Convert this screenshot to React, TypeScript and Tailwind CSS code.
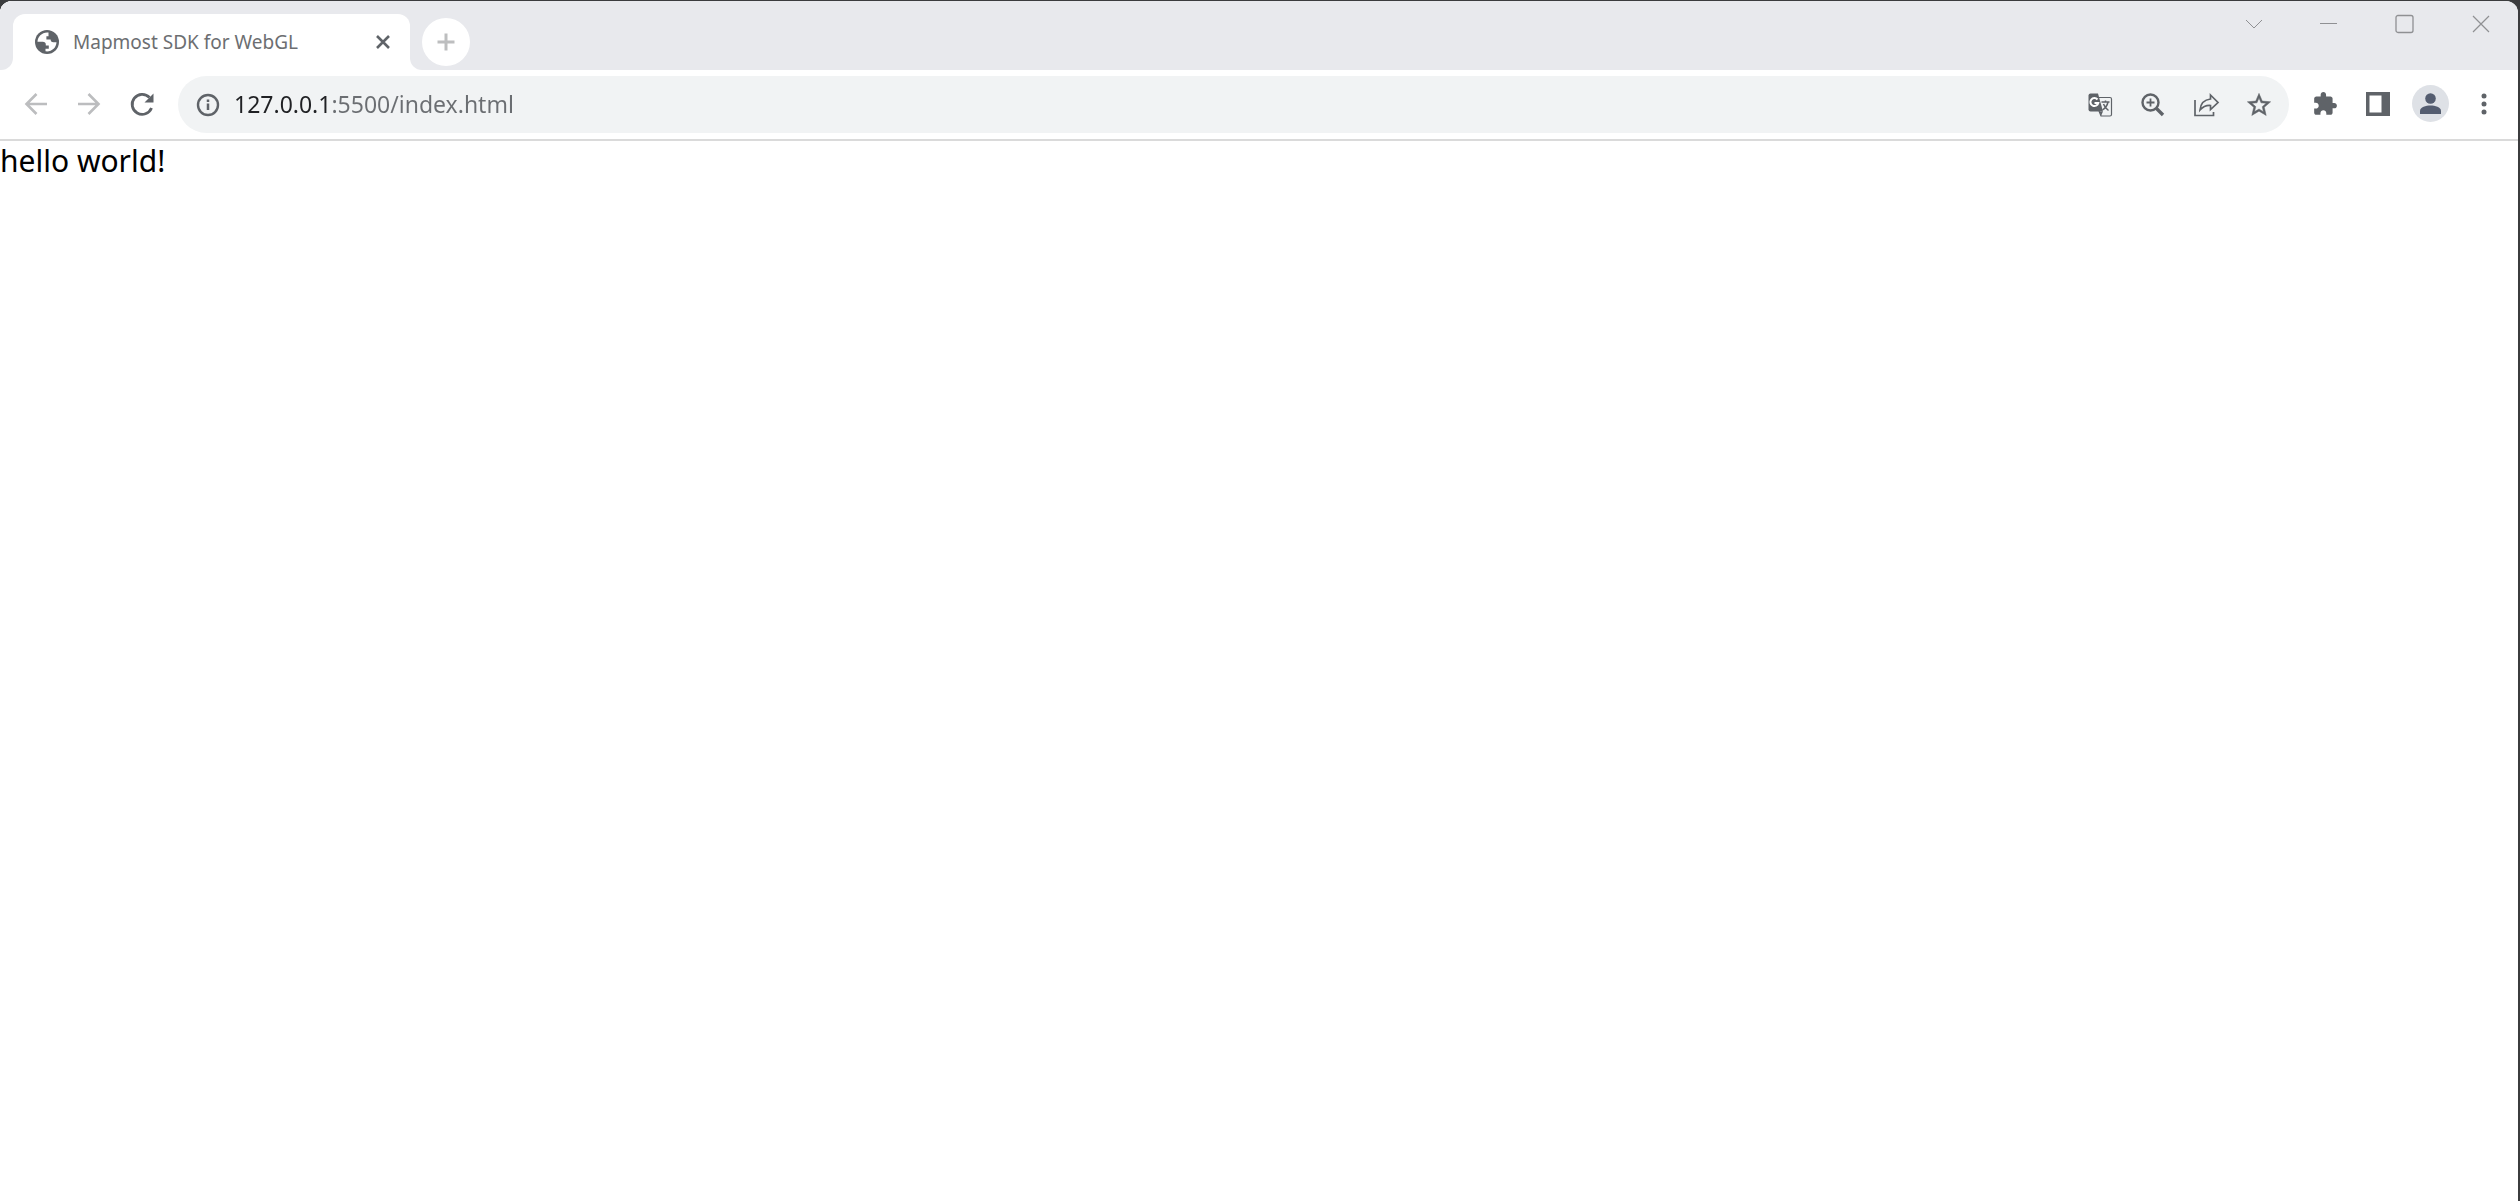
import React from "react";

type IconProps = { children: React.ReactNode; className?: string; box?: string };

function Icon({ children, className = "size-8", box = "0 0 32 32" }: IconProps) {
  return (
    <svg viewBox={box} className={className} fill="none" aria-hidden="true">
      {children}
    </svg>
  );
}

function ToolButton({ label, children, className = "" }: { label: string; children: React.ReactNode; className?: string }) {
  return (
    <button type="button" aria-label={label} className={`flex h-14 w-[53px] shrink-0 items-center justify-center ${className}`}>
      {children}
    </button>
  );
}

function WindowButton({ label, children }: { label: string; children: React.ReactNode }) {
  return (
    <button type="button" aria-label={label} className="flex h-[46px] w-[76px] items-center justify-center text-[#8f9093]">
      {children}
    </button>
  );
}

function TabStrip() {
  return (
    <header className="flex h-[69px] justify-between bg-[#e8e9ed]">
      <div className="flex">
        <div className="w-[13px] self-stretch bg-white">
          <div className="h-full rounded-br-xl bg-[#e8e9ed]" />
        </div>
        <div className="mt-[13px] flex w-[397px] items-center rounded-t-xl bg-white pr-[15px] pl-[22px]">
          <Icon className="size-6 shrink-0" box="0 0 24 24">
            <circle cx="12" cy="12" r="12" fill="#5f6368" />
            <path
              d="M13.5 2.6c-6-.8-10.900 4-11 9.200h5.200c2 0 3.100 1 3.100 2.600v1.200h3v3.200h-3.300v2.500c5.900.8 10.800-3.400 11-9h-3.200c-1.800 0-2.700-1.200-2.700-2.700h-4.200V6.200h2.100z"
              fill="#fff"
            />
          </Icon>
          <h1 className="ml-[14px] flex-1 font-['Noto_Sans'] text-[19px] leading-7 font-normal text-[#6c6e71]">Mapmost SDK for WebGL</h1>
          <button type="button" aria-label="Close tab" className="flex size-6 items-center justify-center">
            <Icon className="size-4" box="0 0 16 16">
              <path d="M2 2l12 12M14 2L2 14" stroke="#5f6368" strokeWidth="2.600" />
            </Icon>
          </button>
        </div>
        <div className="w-3 self-stretch bg-white">
          <div className="h-full rounded-bl-xl bg-[#e8e9ed]" />
        </div>
        <button type="button" aria-label="New tab" className="mt-[17px] flex size-12 items-center justify-center rounded-full bg-white">
          <Icon className="size-5" box="0 0 20 20">
            <path d="M10 1.500v17M1.500 10h17" stroke="#bdbebf" strokeWidth="3" />
          </Icon>
        </button>
      </div>
      <div className="flex">
        <WindowButton label="Search tabs">
          <Icon className="size-6" box="0 0 24 24">
            <path d="M6 8l8 8 8-8" stroke="currentColor" />
          </Icon>
        </WindowButton>
        <WindowButton label="Minimize">
          <Icon className="size-5" box="0 0 20 20">
            <path d="M2 9.500h17" stroke="currentColor" />
          </Icon>
        </WindowButton>
        <WindowButton label="Maximize">
          <Icon className="size-5" box="0 0 20 20">
            <rect x="2" y="1.500" width="17" height="17" rx="2" stroke="currentColor" strokeWidth="1.300" />
          </Icon>
        </WindowButton>
        <WindowButton label="Close">
          <Icon className="size-5" box="0 0 20 20">
            <path d="M3 2l16 16M19 2L3 18" stroke="currentColor" strokeWidth="1.200" />
          </Icon>
        </WindowButton>
      </div>
    </header>
  );
}

function Toolbar() {
  return (
    <nav className="flex h-[71px] items-center border-b-2 border-[#dadada] bg-white pr-2 pl-[9px] text-[#5f6368]">
      <ToolButton label="Back" className="pb-0.5 text-[#bcbdbf]">
        <Icon>
          <path d="M27 16H7M16.500 6L6.500 16l10 10" stroke="currentColor" strokeWidth="2.600" />
        </Icon>
      </ToolButton>
      <ToolButton label="Forward" className="pb-0.5 text-[#bcbdbf]">
        <Icon>
          <path d="M5 16h20M15.500 6l10 10-10 10" stroke="currentColor" strokeWidth="2.600" />
        </Icon>
      </ToolButton>
      <ToolButton label="Reload" className="pb-0.5">
        <Icon>
          <path d="M25.500 20A10 10 0 1 1 23.500 9.500" stroke="currentColor" strokeWidth="2.800" />
          <path d="M27.500 5.500v9h-9z" fill="currentColor" />
        </Icon>
      </ToolButton>
      <div className="ml-[10px] flex h-[57px] min-w-0 flex-1 items-center rounded-full bg-[#f1f3f4] pr-1 pl-3.5">
        <button type="button" aria-label="View site information">
          <Icon>
            <circle cx="16" cy="16" r="10" stroke="currentColor" strokeWidth="2.400" />
            <path d="M16 14.500v6.500M16 10.500v2.500" stroke="currentColor" strokeWidth="2.500" />
          </Icon>
        </button>
        <input
          type="text"
          aria-label="Address"
          defaultValue="127.0.0.1:5500/index.html"
          className="ml-2.5 h-8 min-w-0 flex-1 bg-[linear-gradient(to_right,#202124_98px,#6b6e72_98px)] bg-clip-text pb-0.5 font-['Noto_Sans'] text-[23px] leading-8 text-transparent outline-none"
        />
        <ToolButton label="Translate this page">
          <Icon>
            <path d="M15 8.500h11q1.500 0 1.500 1.500v15.500q0 1.500-1.500 1.500h-9l-2-5" stroke="currentColor" strokeWidth="1.200" />
            <path d="M6.500 4.500H14l5 18H6.500q-2 0-2-2v-14q0-2 2-2z" fill="currentColor" />
            <path d="M15.500 22.500H19l-2 4.500z" fill="currentColor" />
            <path d="M13.500 10.500a4 4 0 1 0 .8 3.500H10.500" stroke="#fff" strokeWidth="2" />
            <path d="M17.500 13h8M21.500 11.500V13M24 13q-1 5-5.500 8M19.500 15q1.500 4 5 6.500" stroke="currentColor" strokeWidth="1.500" />
          </Icon>
        </ToolButton>
        <ToolButton label="Zoom">
          <Icon>
            <circle cx="13.500" cy="13.500" r="8" stroke="currentColor" strokeWidth="2.400" />
            <path d="M13.500 9.500v8M9.500 13.500h8" stroke="currentColor" strokeWidth="1.800" />
            <path d="M19 19l7 7" stroke="currentColor" strokeWidth="3.400" />
          </Icon>
        </ToolButton>
        <ToolButton label="Share this page">
          <Icon>
            <path d="M5 11v15.500h18.500V23" stroke="currentColor" strokeWidth="1.700" />
            <path d="M20.500 6l7.500 7.500-7.500 7v-4q-6-.5-10.500 4.500 1-10 10.500-11z" stroke="currentColor" strokeWidth="1.700" />
          </Icon>
        </ToolButton>
        <ToolButton label="Bookmark this tab">
          <Icon className="size-[28px]" box="0 0 24 24">
            <path
              fill="currentColor"
              stroke="currentColor"
              strokeWidth="0.400"
              d="M22 9.240l-7.190-.62L12 2 9.190 8.630 2 9.240l5.460 4.730L5.820 21 12 17.270 18.180 21l-1.630-7.030L22 9.240zM12 15.400l-3.760 2.270 1-4.280-3.320-2.880 4.380-.38L12 6.100l1.710 4.040 4.380.38-3.320 2.880 1 4.280L12 15.400z"
            />
          </Icon>
        </ToolButton>
      </div>
      <ToolButton label="Extensions" className="ml-[9px] pb-0.5">
        <Icon className="size-[26px]" box="0 0 24 24">
          <path
            fill="currentColor"
            d="M20.500 11H19V7c0-1.100-.9-2-2-2h-4V3.500C13 2.120 11.880 1 10.500 1S8 2.120 8 3.500V5H4c-1.100 0-1.990.9-1.990 2v3.800H3.500c1.490 0 2.700 1.210 2.700 2.700s-1.210 2.700-2.700 2.700H2V20c0 1.100.9 2 2 2h3.800v-1.500c0-1.490 1.210-2.700 2.700-2.700 1.490 0 2.700 1.210 2.700 2.700V22H17c1.100 0 2-.9 2-2v-4h1.500c1.380 0 2.500-1.120 2.500-2.500S21.880 11 20.500 11z"
          />
        </Icon>
      </ToolButton>
      <ToolButton label="Side panel" className="pb-0.5">
        <Icon className="size-6" box="0 0 24 24">
          <path fill="currentColor" fillRule="evenodd" d="M0 0h24v24H0zM3.500 3.500v17h12v-17z" />
        </Icon>
      </ToolButton>
      <ToolButton label="Profile" className="pb-0.5">
        <Icon className="size-[37px]" box="0 0 37 37">
          <circle cx="18.500" cy="18.500" r="18.500" fill="#dee1e6" />
          <circle cx="18.500" cy="13.500" r="5.300" fill="#545d70" />
          <path d="M8 29v-3c0-4 6-5.500 10.500-5.500S29 22 29 26v3z" fill="#545d70" />
        </Icon>
      </ToolButton>
      <ToolButton label="Menu" className="pb-0.5">
        <Icon>
          <circle cx="16" cy="8" r="2.500" fill="currentColor" />
          <circle cx="16" cy="16" r="2.500" fill="currentColor" />
          <circle cx="16" cy="24" r="2.500" fill="currentColor" />
        </Icon>
      </ToolButton>
    </nav>
  );
}

export default function App() {
  return (
    <div className="min-h-screen bg-[#3b3c3e] pt-px pr-0.5">
      <div className="min-h-[calc(100vh-1px)] overflow-hidden rounded-t-xl bg-white">
        <TabStrip />
        <Toolbar />
        <main>
          <p className="font-['Noto_Sans'] text-[30px] leading-10 text-black">hello world!</p>
        </main>
      </div>
    </div>
  );
}
